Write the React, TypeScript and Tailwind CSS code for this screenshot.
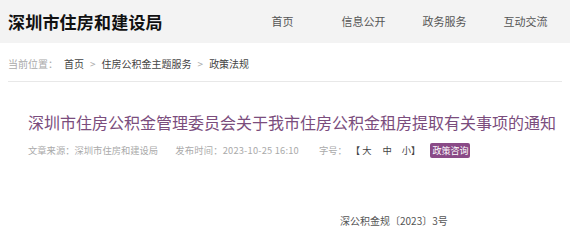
export default function App() {
  const nav = ['首页', '信息公开', '政务服务', '互动交流'];
  return (
    <div className="w-[570px] h-[235px] overflow-hidden bg-white" style={{ fontFamily: '"Noto Sans CJK SC", "Noto Sans", sans-serif' }}>
      <div className="h-[43px] bg-[#f3f3f3] flex items-center">
        <div className="pl-[8px] text-[17px] font-bold text-[#111] leading-none tracking-[0.2px]">深圳市住房和建设局</div>
        <div className="ml-auto mr-[4px] flex">
          {nav.map((n) => (
            <div key={n} className="w-[81px] text-center text-[11px] text-[#555]">{n}</div>
          ))}
        </div>
      </div>

      <div className="mx-[8px] h-[39px] pt-[4px] flex items-center border-b border-[#e8e8e8] text-[10px] leading-none">
        <span className="text-[#aaa]">当前位置：</span>
        <span className="ml-[6px] text-[#444]">首页</span>
        <span className="mx-[6px] text-[#aaa]">&gt;</span>
        <span className="text-[#444]">住房公积金主题服务</span>
        <span className="mx-[6px] text-[#aaa]">&gt;</span>
        <span className="text-[#444]">政策法规</span>
      </div>

      <div className="pl-[28px] pt-[30px]">
        <h1 className="text-[16px] leading-[20px] text-[#7b4d7d] font-normal whitespace-nowrap">深圳市住房公积金管理委员会关于我市住房公积金租房提取有关事项的通知</h1>
        <div className="mt-[11px] flex items-center text-[9.3px] text-[#aaa] leading-none whitespace-nowrap">
          <span>文章来源：深圳市住房和建设局</span>
          <span className="ml-[17px] tracking-[0.2px]">发布时间：2023-10-25 16:10</span>
          <span className="ml-[20px]">字号：</span>
          <span className="ml-[4px] text-[#444]">【</span>
          <span className="ml-[2px] text-[#444]">大</span>
          <span className="ml-[11px] text-[#444]">中</span>
          <span className="ml-[10px] text-[#444]">小</span>
          <span className="text-[#444]">】</span>
          <span className="ml-[10px] bg-[#8a4b87] text-white text-[9px] px-[2px] py-[3px] rounded-[2px]">政策咨询</span>
        </div>
      </div>

      <div className="pl-[340px] pt-[58px] text-[10px] text-[#555] leading-none">深公积金规〔2023〕3号</div>
    </div>
  );
}
